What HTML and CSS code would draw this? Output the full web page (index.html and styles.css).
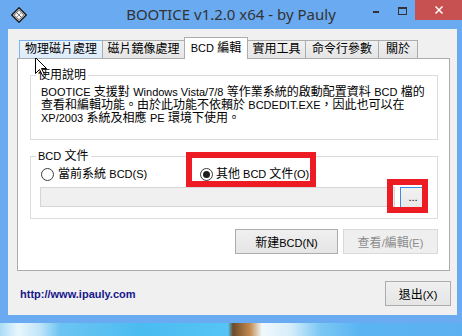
FILE: index.html
```html
<!DOCTYPE html>
<html>
<head>
<meta charset="utf-8">
<title>BOOTICE</title>
<link rel="stylesheet" href="styles.css">
</head>
<body>
<div class="window">
  <div class="titlebar">
    <svg class="appicon" width="16" height="16" viewBox="0 0 16 16">
      <polygon points="8,0.8 15.2,8 8,15.2 0.8,8" fill="#d8d8d8" stroke="#1a1a1a" stroke-width="1.4"/>
      <polygon points="8,3.2 12.8,8 8,12.8 3.2,8" fill="#f4f4f4" stroke="#555" stroke-width="0.8"/>
      <line x1="5.6" y1="5.6" x2="10.4" y2="10.4" stroke="#444" stroke-width="0.8"/>
      <line x1="10.4" y1="5.6" x2="5.6" y2="10.4" stroke="#888" stroke-width="0.8"/>
    </svg>
    <div class="title">BOOTICE v1.2.0 x64 - by Pauly</div>
    <div class="caption">
      <div class="cb min"><span class="min-glyph"></span></div>
      <div class="cb max"><span class="max-glyph"></span></div>
      <div class="cb close">
        <svg width="8" height="8" viewBox="0 0 8 8"><path d="M0.5 0.5 L7.5 7.5 M7.5 0.5 L0.5 7.5" stroke="#fff" stroke-width="1.5"/></svg>
      </div>
    </div>
  </div>
  <div class="client">
    <div class="tabs">
      <div class="tab hover t1">物理磁片處理</div>
      <div class="tab t2">磁片鏡像處理</div>
      <div class="tab active t3"><span class="l">BCD</span> 編輯</div>
      <div class="tab t4">實用工具</div>
      <div class="tab t5">命令行參數</div>
      <div class="tab t6">關於</div>
    </div>
    <div class="panel">
      <div class="group g1">
        <div class="gtitle">使用說明</div>
        <p class="desc"><span class="l">BOOTICE</span> 支援對 <span class="l">Windows Vista/7/8</span> 等作業系統的啟動配置資料 <span class="l">BCD</span> 檔的<br>查看和編輯功能。由於此功能不依賴於 <span class="l">BCDEDIT.EXE</span>，因此也可以在<br><span class="l">XP/2003</span> 系統及相應 <span class="l">PE</span> 環境下使用。</p>
      </div>
      <div class="group g2">
        <div class="gtitle"><span class="l">BCD</span> 文件</div>
        <div class="radios">
          <div class="radio r1"><span class="dot"></span><span class="rtext">當前系統 <span class="l">BCD(S)</span></span></div>
          <div class="radio r2"><span class="dot on"></span><span class="rtext">其他<span class="l"> BCD </span>文件<span class="l">(O)</span></span></div>
        </div>
        <div class="filerow">
          <div class="field"></div>
          <div class="btn browse">...</div>
        </div>
      </div>
      <div class="actions">
        <div class="btn new"><span>新建<span class="l">BCD(N)</span></span></div>
        <div class="btn view disabled"><span>查看<span class="l">/</span>編輯<span class="l">(E)</span></span></div>
      </div>
    </div>
    <div class="footer">
      <a class="link">http://www.ipauly.com</a>
      <div class="btn exit"><span>退出<span class="l">(X)</span></span></div>
    </div>
  </div>
</div>
<div class="desktop"></div>
<div class="mark m1"></div>
<div class="mark m2"></div>
<svg class="cursor" width="13" height="20" viewBox="0 0 13 20">
  <path d="M0.5 0.5 L0.5 16.5 L4.5 12.5 L7.5 18.5 L9.5 17.5 L6.5 11.5 L11.5 11.5 Z" fill="#fff" stroke="#000" stroke-width="1"/>
</svg>
</body>
</html>
```
FILE: styles.css
```css
* { box-sizing: border-box; }
html, body { margin: 0; padding: 0; }
body {
  width: 462px;
  height: 336px;
  overflow: hidden;
  position: relative;
  background: #5ab6f0;
  font-family: "Liberation Sans", "Noto Sans CJK TC", sans-serif;
  font-size: 12px;
  color: #000;
}
.l { font-family: "Liberation Sans", sans-serif; font-size: 11px; }

.window {
  width: 462px;
  height: 323px;
  background: #6aaaf0;
  display: flex;
  flex-direction: column;
}
.titlebar {
  height: 29px;
  display: grid;
  grid-template-columns: 1fr auto 1fr;
  align-items: start;
}
.appicon { margin: 7px 0 0 11px; display: block; }
.title {
  font-family: "Noto Sans", "Open Sans", sans-serif;
  font-size: 15px;
  line-height: 20px;
  padding-top: 4px;
  color: #333;
  white-space: nowrap;
}
.caption { justify-self: end; display: flex; }
.cb { width: 26px; height: 20px; display: flex; justify-content: center; align-items: flex-start; }
.min-glyph { display: block; width: 6px; height: 2px; background: #333; margin-top: 11px; }
.max-glyph { display: block; width: 9px; height: 8px; border: 1px solid #333; border-top-width: 2px; margin-top: 7px; }
.close { width: 47px; background: #c75050; align-items: center; }
.close svg { display: block; }

.client {
  margin: 0 5px 0 8px;
  height: 286px;
  background: #f0f0f0;
  padding: 8px 7px 0 9px;
  display: flex;
  flex-direction: column;
}
.tabs {
  display: flex;
  align-items: flex-end;
  margin-left: 2px;
  position: relative;
  z-index: 1;
  height: 21px;
}
.tab {
  height: 18px;
  border: 1px solid #acacac;
  border-bottom: none;
  background: linear-gradient(#f0f0f0, #e5e5e5);
  text-align: center;
  line-height: 17px;
  white-space: nowrap;
  margin-left: -1px;
}
.tab.t1 { width: 84px; margin-left: 0; }
.tab.t2 { width: 83px; }
.tab.t3 { width: 64px; }
.tab.t4 { width: 59px; }
.tab.t5 { width: 74px; }
.tab.t6 { width: 40px; }
.tab.hover { background: linear-gradient(#ecf4fc, #dcecfc); border-color: #7eb4ea; }
.tab.active {
  height: 22px;
  margin-bottom: -1px;
  background: #fff;
  position: relative;
  z-index: 2;
  line-height: 20px;
}

.panel {
  height: 213px;
  background: #fff;
  border: 1px solid #acacac;
  padding: 0 11px 0 12px;
}
.group {
  border: 1px solid #dcdcdc;
  margin-top: 16px;
}
.g1 { height: 65px; padding-left: 10px; }
.g2 { height: 63px; padding-left: 9px; padding-right: 10px; }
.gtitle {
  width: fit-content;
  margin: -8px 0 0 -5px;
  padding: 0 2px;
  background: #fff;
  line-height: 14px;
  white-space: nowrap;
}
.g2 .gtitle { margin-left: -4px; }
.desc {
  margin: 4px 0 0;
  line-height: 13px;
  white-space: nowrap;
}
.radios { display: flex; margin-top: 4px; height: 15px; }
.radio { display: flex; align-items: center; line-height: 15px; white-space: nowrap; }
.radio.r1 { width: 160px; padding-left: 1px; }
.dot {
  width: 13px;
  height: 13px;
  border: 1px solid #3c3c3c;
  border-radius: 50%;
  background: #fff;
  margin-right: 4px;
  display: flex;
  align-items: center;
  justify-content: center;
  flex: none;
}
.r2 .dot { margin-right: 3px; }
.dot.on::after {
  content: "";
  width: 7px;
  height: 7px;
  border-radius: 50%;
  background: #1e1e1e;
}
.filerow { display: flex; gap: 5px; margin-top: 5px; align-items: flex-start; }
.field {
  width: 355px;
  height: 20px;
  background: #f0f0f0;
  border: 1px solid #d5d5d5;
}
.btn {
  border: 1px solid #acacac;
  background: linear-gradient(#f0f0f0, #e5e5e5);
  display: flex;
  align-items: center;
  justify-content: center;
  white-space: nowrap;
}
.browse {
  width: 26px;
  height: 22px;
  border-color: #3c8ce6;
  background: linear-gradient(#f2f2f2, #e8e8e8);
  font-family: "Liberation Sans", sans-serif;
  font-size: 11px;
  align-items: flex-end;
  padding-bottom: 5px;
  line-height: 11px;
}
.actions {
  display: flex;
  justify-content: flex-end;
  gap: 5px;
  margin-top: 10px;
}
.new { width: 103px; height: 25px; }
.view { width: 95px; height: 25px; }
.btn.disabled { border-color: #d9d9d9; background: #efefef; color: #8c8c8c; }

.footer {
  display: flex;
  justify-content: space-between;
  align-items: center;
  margin-top: 10px;
  padding-left: 3px;
  margin-right: -1px;
}
.link {
  font-family: "Liberation Sans", sans-serif;
  font-weight: bold;
  font-size: 11px;
  color: #16168c;
}
.exit { width: 66px; height: 25px; }

.desktop {
  height: 13px;
  background: linear-gradient(90deg, #a9dcf6 0px, #e9f6fd 18px, #bfe5f8 40px, #6cc4f2 60px, #4bbcf0 140px, #55c4f6 228px, #6b4a2a 233px, #c48a50 250px, #f0f8fc 262px, #d6eefa 290px, #7cc8f4 320px, #5ab4f2 360px, #5cb0f0 462px);
}
.mark {
  position: absolute;
  border: 6px solid #ed1c24;
}
.m1 { left: 186px; top: 152px; width: 130px; height: 35px; }
.m2 { left: 387px; top: 179px; width: 41px; height: 34px; }
.cursor { position: absolute; left: 35px; top: 57px; }
```
